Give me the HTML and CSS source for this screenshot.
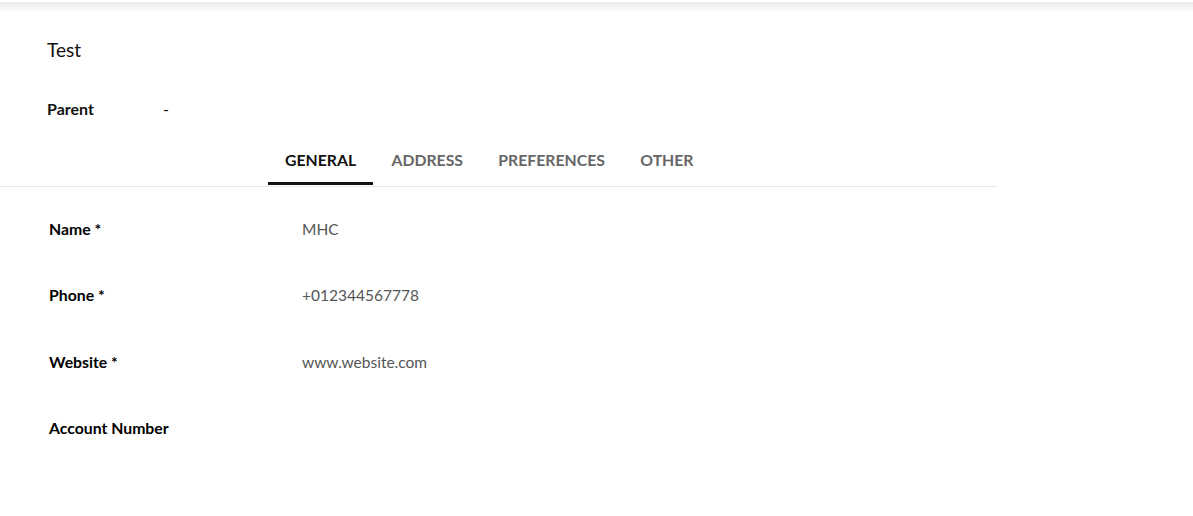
FILE: index.html
```html
<!DOCTYPE html>
<html lang="en">
  <head>
    <meta charset="UTF-8" />
    <meta name="viewport" content="width=device-width, initial-scale=1.0" />
    <title>Account Details</title>
    <link rel="stylesheet" href="styles.css">
  </head>
  <body>
    <div class="topbar"></div>

    <div class="record-header">
      <h1 class="record-title">Test</h1>
      <div class="parent-row">
        <span class="parent-label">Parent</span>
        <span class="parent-value">-</span>
      </div>
    </div>

    <!-- Tabs -->
    <div class="tabs">
      <div class="tab active">General</div>
      <div class="tab">Address</div>
      <div class="tab">Preferences</div>
      <div class="tab">Other</div>
    </div>

    <!-- General fields -->
    <div class="fields">
      <div class="field-row">
        <div class="field-label">Name *</div>
        <div class="field-value">MHC</div>
      </div>
      <div class="field-row">
        <div class="field-label">Phone *</div>
        <div class="field-value">+012344567778</div>
      </div>
      <div class="field-row">
        <div class="field-label">Website *</div>
        <div class="field-value">www.website.com</div>
      </div>
      <div class="field-row">
        <div class="field-label">Account Number</div>
        <div class="field-value"></div>
      </div>
    </div>
  </body>
</html>
```

FILE: styles.css
```css
/* Basic page styling */
body {
  font-family: Lato, "Open Sans", Arial, sans-serif;
  background-color: #fff;
  color: #111;
  margin: 0;
  padding: 0;
}

/* Shadow of the header above */
.topbar {
  height: 12px;
  background: linear-gradient(#fff 0, #fff 2px, #e9e9e9 2px, #fff 12px);
}

/* Record header */
.record-header {
  padding-left: 47px;
}

.record-title {
  margin: 26px 0 0;
  font-size: 19px;
  font-weight: 400;
  line-height: 24px;
}

.parent-row {
  display: flex;
  margin-top: 37px;
  font-size: 16px;
  line-height: 20px;
}

.parent-label {
  width: 116px;
  font-weight: 700;
}

/* Tab bar */
.tabs {
  display: flex;
  gap: 1.3px;
  width: 997px;
  margin-top: 18px;
  padding: 0 0 1px 268px;
  box-sizing: border-box;
  border-bottom: 1px solid #e6e6e6;
}

.tab {
  padding: 13px 17px 12px;
  font-size: 15.8px;
  line-height: 20px;
  font-weight: 700;
  text-transform: uppercase;
  color: #666;
  border-bottom: 3px solid transparent;
  cursor: pointer;
}

.tab.active {
  color: #111;
  border-bottom-color: #111;
}

/* Field rows */
.fields {
  margin-top: 32px;
  padding-left: 49px;
}

.field-row {
  display: flex;
  height: 66.3px;
  font-size: 15.8px;
  line-height: 20px;
}

.field-label {
  width: 253px;
  font-weight: 700;
  color: #000;
}

.field-value {
  font-size: 15.5px;
  color: #555;
}
```
